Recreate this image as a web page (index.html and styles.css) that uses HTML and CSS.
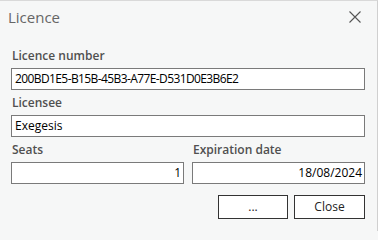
FILE: index.html
```html
<!DOCTYPE html>
<html>
<head>
<meta charset="utf-8">
<link rel="stylesheet" href="styles.css">
</head>
<body>
<div class="dialog">
  <div class="titlebar">
    <span class="title">Licence</span>
    <svg class="close" width="12" height="12" viewBox="0 0 12 12"><path d="M0.5 0.5 L11.5 11.5 M11.5 0.5 L0.5 11.5" stroke="#555" stroke-width="1.1" fill="none"/></svg>
  </div>
  <div class="form">
    <div class="label">Licence number</div>
    <div class="input guid">200BD1E5-B15B-45B3-A77E-D531D0E3B6E2</div>
    <div class="label">Licensee</div>
    <div class="input">Exegesis</div>
    <div class="row">
      <div class="col">
        <div class="label">Seats</div>
        <div class="input num">1</div>
      </div>
      <div class="col">
        <div class="label">Expiration date</div>
        <div class="input num">18/08/2024</div>
      </div>
    </div>
    <div class="buttons">
      <div class="btn">...</div>
      <div class="btn wide">Close</div>
    </div>
  </div>
</div>
</body>
</html>
```
FILE: styles.css
```css
html, body {
  margin: 0;
  padding: 0;
  background: #f6f7f7;
}
.dialog {
  width: 377px;
  height: 230px;
  background: #f6f7f7;
  border-top: 1px solid #d9d9d9;
  border-right: 1px solid #d0d0d0;
  font-family: "Open Sans", "Noto Sans", sans-serif;
  font-size: 12px;
}
.titlebar {
  height: 42px;
  display: flex;
  justify-content: space-between;
  align-items: flex-start;
  padding: 0 16px 0 8px;
}
.title {
  font-size: 15px;
  color: #666;
  line-height: 20px;
  margin-top: 6px;
}
.close {
  margin-top: 10px;
}
.form {
  padding-left: 11px;
  width: 354px;
}
.label {
  height: 25px;
  line-height: 16px;
  padding-top: 5px;
  box-sizing: border-box;
  font-weight: 600;
  color: #505050;
  padding-left: 1px;
}
.input {
  height: 22px;
  box-sizing: border-box;
  border: 1px solid #7a7a7a;
  background: #fff;
  line-height: 20px;
  padding: 0 2px 0 3px;
  color: #000;
  white-space: nowrap;
}
.input.guid {
  letter-spacing: -0.6px;
}
.input.num {
  text-align: right;
}
.row {
  display: flex;
  gap: 8px;
}
.col {
  width: 173px;
}
.buttons {
  display: flex;
  justify-content: flex-end;
  gap: 6px;
  margin-top: 11px;
}
.btn {
  width: 70px;
  height: 24px;
  box-sizing: border-box;
  border: 1px solid #333;
  background: #fff;
  text-align: center;
  line-height: 22px;
  color: #222;
}
.btn.wide {
  width: 71px;
}
```
